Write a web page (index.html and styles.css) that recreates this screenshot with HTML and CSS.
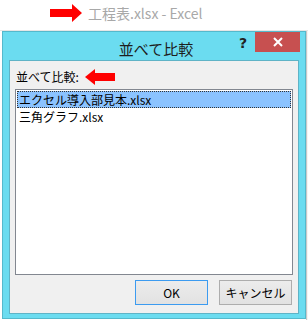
FILE: index.html
```html
<!DOCTYPE html>
<html lang="ja">
<head>
    <meta charset="UTF-8">
    <title>並べて比較</title>
    <link rel="stylesheet" href="styles.css">
</head>
<body>
    <div class="screen">
        <!-- Excel window title behind the dialog -->
        <div class="app-title">
            <svg class="arrow" width="32" height="18" viewBox="0 0 32 18">
                <polygon points="0,5 22,5 22,0 32,9 22,18 22,13 0,13" fill="#f00"/>
            </svg>
            <span class="app-name">工程表.xlsx - Excel</span>
        </div>

        <div class="main">
            <div class="dialog">
                <div class="dialog-title">
                    <span class="caption">並べて比較</span>
                    <span class="help">?</span>
                    <span class="close">
                        <svg width="10" height="10" viewBox="0 0 10 10">
                            <path d="M1 1 L9 9 M9 1 L1 9" stroke="#fff" stroke-width="2"/>
                        </svg>
                    </span>
                </div>
                <div class="dialog-body">
                    <div class="label-row">
                        <span class="label">並べて比較:</span>
                        <svg class="arrow" width="30" height="16" viewBox="0 0 30 16">
                            <polygon points="0,8 10,0 10,4 30,4 30,12 10,12 10,16" fill="#f00"/>
                        </svg>
                    </div>
                    <div class="listbox">
                        <div class="item selected">エクセル導入部見本.xlsx</div>
                        <div class="item">三角グラフ.xlsx</div>
                    </div>
                    <div class="buttons">
                        <button class="btn default">OK</button>
                        <button class="btn">キャンセル</button>
                    </div>
                </div>
            </div>
            <div class="behind"></div>
        </div>
    </div>
</body>
</html>
```

FILE: styles.css
```css
body {
    margin: 0;
    background-color: #fff;
    font-family: "Noto Sans CJK JP", "Liberation Sans", sans-serif;
}

.screen {
    width: 308px;
    height: 320px;
    overflow: hidden;
    display: flex;
    flex-direction: column;
}

.app-title {
    height: 31px;
    border-bottom: 1px solid #e6e6e6;
    display: flex;
    align-items: center;
    padding-left: 50px;
    box-sizing: border-box;
    gap: 6px;
}

.app-title .arrow {
    margin-top: -4px;
}

.app-name {
    color: #a8a8a8;
    font-size: 14px;
    line-height: 16px;
    margin-top: -4px;
}

.main {
    flex: 1;
    display: flex;
    padding-left: 2px;
    background-color: #fff;
}

.dialog {
    position: relative;
    width: 304px;
    height: 288px;
    box-sizing: border-box;
    background-color: #6bdcf0;
    border: 1px solid #55b9cc;
    padding: 0 6px 4px 6px;
    display: flex;
    flex-direction: column;
}

.behind {
    flex: 1;
    background-color: #f4f4f4;
    border-left: 1px solid #c8c8c8;
}

.dialog-title {
    height: 28px;
    display: flex;
    align-items: center;
    justify-content: center;
}

.caption {
    font-size: 15px;
    line-height: 18px;
    color: #1e1e1e;
    margin-top: 6px;
    margin-left: 4px;
}

.help {
    position: absolute;
    top: 3px;
    right: 58px;
    font-family: "DejaVu Sans", sans-serif;
    font-weight: bold;
    font-size: 14px;
    color: #222;
}

.close {
    position: absolute;
    top: 0;
    right: 5px;
    width: 45px;
    height: 20px;
    background-color: #c75050;
    display: flex;
    align-items: center;
    justify-content: center;
}

.dialog-body {
    flex: 1;
    background-color: #f0f0f0;
    border: 1px solid #5fb3c6;
    padding: 0 5px 0 5px;
    display: flex;
    flex-direction: column;
}

.label-row {
    height: 28px;
    display: flex;
    align-items: center;
    gap: 6px;
    padding-left: 1px;
}

.label {
    font-size: 12px;
    line-height: 14px;
    color: #000;
    margin-top: 3px;
}

.label-row .arrow {
    margin-top: 3px;
}

.listbox {
    height: 186px;
    box-sizing: border-box;
    background-color: #fff;
    border: 1px solid #828790;
    padding: 1px;
}

.item {
    height: 17px;
    line-height: 17px;
    font-size: 12px;
    padding-left: 2px;
    color: #000;
    box-sizing: border-box;
}

.item.selected {
    background-color: #8bc3ff;
    outline: 1px dotted #333;
    outline-offset: -1px;
}

.buttons {
    display: flex;
    justify-content: flex-end;
    gap: 11px;
    padding-top: 5px;
    padding-right: 1px;
}

.btn {
    width: 73px;
    height: 25px;
    font-family: "Noto Sans CJK JP", "Liberation Sans", sans-serif;
    font-size: 12px;
    line-height: 14px;
    color: #000;
    background: linear-gradient(#ececec, #e2e2e2);
    border: 1px solid #adadad;
    padding: 0;
}

.btn.default {
    border-color: #3c9bf0;
}
```
